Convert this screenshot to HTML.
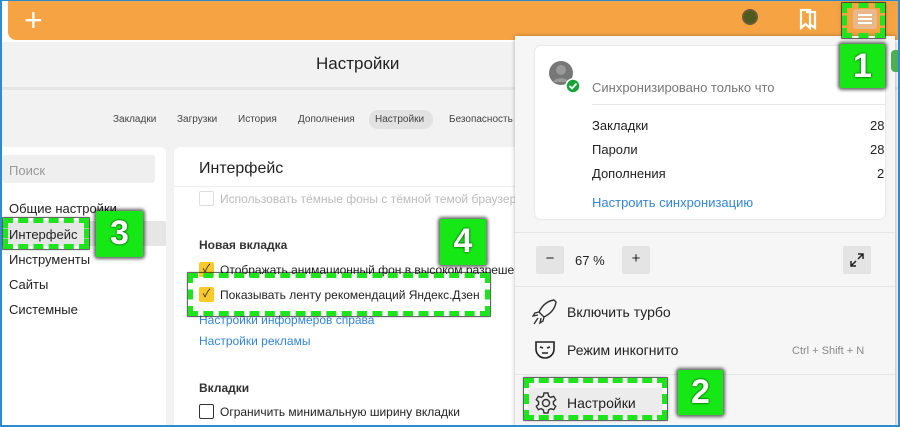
<!DOCTYPE html><html><head><meta charset="utf-8"><style>
*{box-sizing:border-box;margin:0;padding:0}
body{width:900px;height:427px;overflow:hidden;font-family:"Liberation Sans","Noto Sans CJK SC",sans-serif;background:#f1f1f1;position:relative;color:#222}
.frame{position:absolute;inset:0;border:2px solid #2d8bd2;border-top:1px solid #2d8bd2;pointer-events:none;z-index:50}
.a{position:absolute}
.top{left:2px;top:0;width:896px;height:42px;background:#fff}
.bar{left:8px;top:1px;width:890px;height:39px;background:#f5a343;border-radius:0 0 0 8px}
.green{position:absolute;background:#15e815;color:#fff;font-weight:bold;font-size:34px;text-align:center;border-radius:2px;box-shadow:0 0 3px 2px rgba(0,0,0,.6);text-shadow:0 0 2px #000;line-height:44px;z-index:40}
.dash{position:absolute;border:5px dashed #1ee41e;outline:1px solid rgba(0,0,0,.5);z-index:39;box-shadow:0 0 3px rgba(0,0,0,.5)}
.s13{font-size:13px}
.chk{font-size:11px;text-align:center;line-height:15px}
</style></head><body>
<div class="frame"></div>
<div class="a top"></div>
<div class="a bar"></div>
<div class="a" style="left:24px;top:3px;color:#fff;font-size:32px;line-height:34px">+</div>
<div class="a" style="left:742px;top:9px;width:16px;height:16px;border-radius:50%;background:#4e5a1e;border:2px solid #6b5a3a"></div>
<svg class="a" style="left:798px;top:8px" width="20" height="22" viewBox="0 0 20 22"><path d="M3 2h9v18l-4.5-4L3 20z M8 4h9v16l-4-3" fill="none" stroke="#fff" stroke-width="2.2"/></svg>
<div class="a" style="left:853px;top:9px;width:24px;height:20px;background:#e8b88a;border-radius:3px"></div>
<div class="a" style="left:858px;top:14px;width:14px;height:2px;background:#fff;box-shadow:0 4px 0 #fff,0 8px 0 #fff"></div>
<div class="a" style="left:2px;top:42px;width:896px;height:45px;background:#f2f2f2"></div>
<div class="a" style="left:316px;top:54px;font-size:17px">Настройки</div>
<div class="a" style="left:2px;top:87px;width:896px;height:3px;background:#e5e5e5"></div>
<div class="a" style="left:0;top:90px;width:520px;height:337px;background:#f2f2f2"></div>
<div class="a" style="top:114px;left:113px;font-size:10px;color:#444">
<span style="position:absolute;left:0">Закладки</span><span style="position:absolute;left:64px">Загрузки</span><span style="position:absolute;left:125px">История</span><span style="position:absolute;left:185px">Дополнения</span><span style="position:absolute;left:256px;top:-4px;background:#e2e2e2;border-radius:9px;width:64px;height:19px"></span><span style="position:absolute;left:262px">Настройки</span><span style="position:absolute;left:336px">Безопасность</span></div>
<div class="a" style="left:2px;top:147px;width:164px;height:280px;background:#fff;border-radius:0 6px 0 0"></div>
<div class="a" style="left:2px;top:155px;width:153px;height:28px;background:#efefef;border-radius:3px"></div>
<div class="a s13" style="left:9px;top:163px;color:#999">Поиск</div>
<div class="a" style="left:2px;top:221px;width:164px;height:25px;background:#e6e6e6"></div>
<div class="a s13" style="left:9px;top:201px">Общие настройки</div>
<div class="a s13" style="left:9px;top:227px">Интерфейс</div>
<div class="a s13" style="left:9px;top:252px">Инструменты</div>
<div class="a s13" style="left:9px;top:277px">Сайты</div>
<div class="a s13" style="left:9px;top:302px">Системные</div>
<div class="a" style="left:174px;top:147px;width:345px;height:280px;background:#fff;border-radius:6px 0 0 0"></div>
<div class="a" style="left:174px;top:186px;width:345px;height:1px;background:#eee"></div>
<div class="a" style="left:199px;top:160px;font-size:16px">Интерфейс</div>
<div class="a" style="left:199px;top:191px;width:15px;height:15px;border:1.5px solid #ddd;border-radius:2px"></div>
<div class="a" style="left:220px;top:192px;font-size:12px;color:#bbb;white-space:nowrap;width:295px;overflow:hidden">Использовать тёмные фоны с тёмной темой браузера</div>
<div class="a" style="left:199px;top:238px;font-size:12px;font-weight:bold;color:#333">Новая вкладка</div>
<div class="a chk" style="left:199px;top:262px;width:15px;height:15px;background:#fbc92a;border-radius:2px">✓</div>
<div class="a" style="left:220px;top:263px;font-size:12px;white-space:nowrap;width:295px;overflow:hidden">Отображать анимационный фон в высоком разрешении</div>
<div class="a chk" style="left:199px;top:287px;width:15px;height:15px;background:#fbc92a;border-radius:2px">✓</div>
<div class="a" style="left:220px;top:288px;font-size:12px;white-space:nowrap">Показывать ленту рекомендаций Яндекс.Дзен</div>
<div class="a" style="left:199px;top:313px;font-size:12px;color:#3585d8">Настройки информеров справа</div>
<div class="a" style="left:199px;top:334px;font-size:12px;color:#3585d8">Настройки рекламы</div>
<div class="a" style="left:199px;top:381px;font-size:12px;font-weight:bold;color:#333">Вкладки</div>
<div class="a" style="left:199px;top:404px;width:15px;height:15px;border:1.5px solid #333;border-radius:2px"></div>
<div class="a" style="left:220px;top:405px;font-size:12px;white-space:nowrap">Ограничить минимальную ширину вкладки</div>
<div class="a" style="left:515px;top:36px;width:380px;height:391px;background:#f6f6f6;box-shadow:0 0 4px rgba(0,0,0,.3)"></div>
<div class="a" style="left:535px;top:46px;width:350px;height:173px;background:#fff;border-radius:6px;box-shadow:0 0 2px rgba(0,0,0,.15)"></div>
<svg class="a" style="left:548px;top:60px" width="36" height="36" viewBox="0 0 36 36"><circle cx="13" cy="13" r="12" fill="#777"/><circle cx="13" cy="10" r="5" fill="#999"/><path d="M5 22c2-5 14-5 16 0" fill="#999"/><circle cx="25" cy="26" r="7" fill="#1aa23a" stroke="#fff" stroke-width="1.5"/><path d="M21.5 26l2.5 2.5 4.5-5" fill="none" stroke="#fff" stroke-width="1.8"/></svg>
<div class="a s13" style="left:592px;top:80px;color:#777">Синхронизировано только что</div>
<div class="a" style="left:592px;top:104px;width:293px;height:1px;background:#e8e8e8"></div>
<div class="a s13" style="left:592px;top:118px">Закладки</div><div class="a s13" style="left:870px;top:118px">28</div>
<div class="a s13" style="left:592px;top:142px">Пароли</div><div class="a s13" style="left:870px;top:142px">28</div>
<div class="a s13" style="left:592px;top:166px">Дополнения</div><div class="a s13" style="left:877px;top:166px">2</div>
<div class="a s13" style="left:592px;top:195px;color:#3585d8">Настроить синхронизацию</div>
<div class="a" style="left:515px;top:232px;width:380px;height:1px;background:#e5e5e5"></div>
<div class="a" style="left:536px;top:246px;width:28px;height:28px;background:#e4e4e4;border-radius:2px;text-align:center;line-height:26px;font-size:15px">−</div>
<div class="a s13" style="left:575px;top:253px">67 %</div>
<div class="a" style="left:622px;top:246px;width:28px;height:28px;background:#e4e4e4;border-radius:2px;text-align:center;line-height:26px;font-size:15px">+</div>
<div class="a" style="left:843px;top:246px;width:28px;height:28px;background:#e4e4e4;border-radius:2px"></div>
<svg class="a" style="left:847px;top:250px" width="20" height="20" viewBox="0 0 20 20"><path d="M11 4h5v5M16 4l-5 5M4 11v5h5M4 16l5-5" fill="none" stroke="#222" stroke-width="1.5"/></svg>
<div class="a" style="left:515px;top:286px;width:380px;height:1px;background:#e5e5e5"></div>
<svg class="a" style="left:532px;top:298px" width="26" height="28" viewBox="0 0 26 28"><path d="M22 2C15 3 10 8 7 14l5 5c6-3 11-8 12-15zM7 14l-4 1-2 3 5-1M12 19l-1 4-3 2 1-5M6 20l-4 6" fill="none" stroke="#333" stroke-width="1.4"/></svg>
<div class="a" style="left:567px;top:304px;font-size:14px">Включить турбо</div>
<svg class="a" style="left:534px;top:340px" width="22" height="20" viewBox="0 0 22 20"><path d="M2 2h18v7c0 5-4 9-9 9s-9-4-9-9z M6 7l3 1M13 8l3-1M8 13h6" fill="none" stroke="#222" stroke-width="1.6"/></svg>
<div class="a" style="left:567px;top:342px;font-size:14px">Режим инкогнито</div>
<div class="a" style="left:792px;top:345px;font-size:11px;color:#888">Ctrl + Shift + N</div>
<div class="a" style="left:515px;top:374px;width:380px;height:1px;background:#e5e5e5"></div>
<div class="a" style="left:528px;top:388px;width:135px;height:30px;background:#ececec;border-radius:3px"></div>
<svg class="a" style="left:534px;top:391px" width="24" height="24" viewBox="0 0 24 24"><g fill="none" stroke="#333" stroke-width="1.4"><circle cx="12" cy="12" r="3.5"/><path d="M10 2h4l.6 3 2.2 1.3 2.9-1 2 3.4-2.3 2v2.6l2.3 2-2 3.4-2.9-1-2.2 1.3-.6 3h-4l-.6-3-2.2-1.3-2.9 1-2-3.4 2.3-2v-2.6l-2.3-2 2-3.4 2.9 1L9.4 5z"/></g></svg>
<div class="a" style="left:567px;top:395px;font-size:14px">Настройки</div>
<div class="a" style="left:891px;top:50px;width:9px;height:22px;background:#4caf50;border-radius:4px 0 0 4px"></div>
<div class="dash" style="left:842px;top:3px;width:43px;height:35px"></div>
<div class="green" style="left:840px;top:44px;width:45px;height:44px">1</div>
<div class="dash" style="left:3px;top:218px;width:86px;height:31px"></div>
<div class="green" style="left:96px;top:211px;width:47px;height:46px">3</div>
<div class="dash" style="left:188px;top:273px;width:302px;height:43px"></div>
<div class="green" style="left:440px;top:219px;width:46px;height:46px">4</div>
<div class="dash" style="left:524px;top:378px;width:143px;height:42px"></div>
<div class="green" style="left:678px;top:370px;width:45px;height:45px">2</div>
</body></html>
